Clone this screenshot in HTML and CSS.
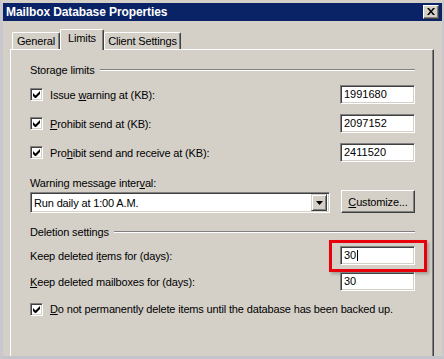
FILE: index.html
```html
<!DOCTYPE html>
<html>
<head>
<meta charset="utf-8">
<link rel="stylesheet" href="styles.css">
</head>
<body>
<div class="window">
  <div class="titlebar">
    <span class="title">Mailbox Database Properties</span>
    <div class="close">
      <svg width="8" height="7" viewBox="0 0 8 7"><path d="M0 0h2l2 2.5L6 0h2L5 3.5 8 7H6L4 4.5 2 7H0l3-3.5z" fill="#000"/></svg>
    </div>
  </div>
  <div class="client">
    <div class="tabs">
      <div class="tab">General</div>
      <div class="tab active">Limits</div>
      <div class="tab">Client Settings</div>
    </div>
    <div class="panel">
      <div class="group g1"><span>Storage limits</span><div class="etch"></div></div>
      <div class="row r1">
        <div class="check"><svg width="7" height="7" viewBox="0 0 7 7"><path d="M0 2v3l2 2h1l4-4V0L2.5 4.5z" fill="#000"/></svg></div>
        <span class="label">Issue <u>w</u>arning at (KB):</span>
        <div class="field">1991680</div>
      </div>
      <div class="row r2">
        <div class="check"><svg width="7" height="7" viewBox="0 0 7 7"><path d="M0 2v3l2 2h1l4-4V0L2.5 4.5z" fill="#000"/></svg></div>
        <span class="label"><u>P</u>rohibit send at (KB):</span>
        <div class="field">2097152</div>
      </div>
      <div class="row r2">
        <div class="check"><svg width="7" height="7" viewBox="0 0 7 7"><path d="M0 2v3l2 2h1l4-4V0L2.5 4.5z" fill="#000"/></svg></div>
        <span class="label">Pro<u>h</u>ibit send and receive at (KB):</span>
        <div class="field">2411520</div>
      </div>
      <div class="plain lbl-interval">Warning message inter<u>v</u>al:</div>
      <div class="row selrow">
        <div class="select">
          <span class="seltext">Run daily at 1:00 A.M.</span>
          <div class="arrow"><svg width="7" height="4" viewBox="0 0 7 4"><path d="M0 0h7L3.5 4z" fill="#000"/></svg></div>
        </div>
        <div class="button"><u>C</u>ustomize...</div>
      </div>
      <div class="group g2"><span>Deletion settings</span><div class="etch"></div></div>
      <div class="row r3">
        <span class="label">Keep deleted i<u>t</u>ems for (days):</span>
        <div class="field focus">30<span class="caret"></span><div class="highlight"></div></div>
      </div>
      <div class="row r4">
        <span class="label"><u>K</u>eep deleted mailboxes for (days):</span>
        <div class="field">30</div>
      </div>
      <div class="row r5">
        <div class="check"><svg width="7" height="7" viewBox="0 0 7 7"><path d="M0 2v3l2 2h1l4-4V0L2.5 4.5z" fill="#000"/></svg></div>
        <span class="label"><u>D</u>o not permanently delete items until the database has been backed up.</span>
      </div>
    </div>
  </div>
</div>
</body>
</html>
```

FILE: styles.css
```css
* { box-sizing: border-box; }
html, body { margin: 0; padding: 0; }
body {
  width: 444px;
  height: 359px;
  overflow: hidden;
  background: #d4d0c8;
  font-family: "Liberation Sans", Arial, sans-serif;
  font-size: 11px;
  letter-spacing: -0.15px;
  color: #000;
}
.window {
  width: 444px;
  height: 359px;
  display: flex;
  flex-direction: column;
  background: #d4d0c8;
  border-top: 3px solid #d4d0c8;
  border-left: 3px solid #c9c8ce;
  border-right: 2px solid #c9c8ce;
  border-bottom: 3px solid #c4c4cc;
  overflow: hidden;
}
.titlebar {
  height: 18px;
  flex: none;
  background: #0a2266;
  display: flex;
  align-items: center;
  justify-content: space-between;
  padding: 0 3px 0 3px;
}
.title {
  color: #fff;
  font-weight: bold;
  font-size: 12px;
  letter-spacing: -0.1px;
}
.close {
  width: 16px;
  height: 14px;
  background: #d4d0c8;
  border-top: 1px solid #fff;
  border-left: 1px solid #fff;
  border-right: 1px solid #404040;
  border-bottom: 1px solid #404040;
  box-shadow: inset -1px -1px 0 #808080;
  display: flex;
  align-items: center;
  justify-content: center;
  padding-bottom: 1px;
}
.client {
  flex: 1;
  display: flex;
  flex-direction: column;
  padding-top: 8px;
}
.tabs {
  display: flex;
  align-items: flex-start;
  margin-left: 9px;
  height: 20px;
  position: relative;
  z-index: 2;
}
.tab {
  margin-top: 3px;
  height: 17px;
  padding: 0 6px;
  line-height: 16px;
  border-top: 1px solid #fff;
  border-left: 1px solid #fff;
  border-right: 1px solid #404040;
  box-shadow: inset -1px 0 0 #808080;
  border-top-left-radius: 2px;
  border-top-right-radius: 2px;
  background: #d4d0c8;
  white-space: nowrap;
}
.tab:first-child { width: 48px; text-align: center; padding: 0; }
.tab.active {
  margin-top: 0;
  height: 21px;
  width: 44px;
  padding: 0;
  text-align: center;
  line-height: 17px;
}
.tab:last-child { width: 77px; text-align: center; padding: 0; }
.panel {
  flex: 1;
  margin: 0 8px 0 7px;
  border-top: 1px solid #fff;
  border-left: 1px solid #fff;
  border-right: 1px solid #404040;
  box-shadow: inset -1px 0 0 #808080;
  padding: 0 18px 0 19px;
  display: flex;
  flex-direction: column;
}
.group {
  display: flex;
  align-items: center;
  height: 14px;
  line-height: 14px;
}
.group span { margin-right: 5px; white-space: nowrap; }
.etch {
  flex: 1;
  height: 2px;
  border-top: 1px solid #808080;
  border-bottom: 1px solid #fff;
}
.g1 { margin-top: 13px; }
.g2 { margin-top: 12px; }
.row {
  display: flex;
  align-items: center;
}
.r1 { margin-top: 8px; height: 19px; }
.r2 { margin-top: 10px; height: 19px; }
.r3 { margin-top: 7px; height: 19px; }
.r4 { margin-top: 7px; height: 19px; }
.r5 { margin-top: 11px; height: 14px; }
.label { flex: 1; white-space: nowrap; line-height: 14px; }
.check {
  width: 13px;
  height: 13px;
  flex: none;
  margin-right: 7px;
  background: #fff;
  border-top: 1px solid #808080;
  border-left: 1px solid #808080;
  border-right: 1px solid #fff;
  border-bottom: 1px solid #fff;
  box-shadow: inset 1px 1px 0 #404040, inset -1px -1px 0 #d4d0c8;
  display: flex;
  align-items: center;
  justify-content: center;
}
.check svg { display: block; }
.field {
  width: 75px;
  height: 19px;
  flex: none;
  background: #fff;
  border-top: 1px solid #808080;
  border-left: 1px solid #808080;
  border-right: 1px solid #fff;
  border-bottom: 1px solid #fff;
  box-shadow: inset 1px 1px 0 #404040, inset -1px -1px 0 #d4d0c8;
  padding: 0 0 0 3px;
  line-height: 17px;
  letter-spacing: 0;
  position: relative;
}
.caret {
  display: inline-block;
  width: 1px;
  height: 11px;
  background: #000;
  vertical-align: -2px;
  margin-left: 1px;
}
.highlight {
  position: absolute;
  left: -12px;
  top: -7px;
  width: 98px;
  height: 32px;
  border: 3px solid #e8000a;
  box-shadow: 2px 2px 3px rgba(0,0,0,0.25);
}
.plain { line-height: 14px; }
.lbl-interval { margin-top: 14px; }
.selrow {
  margin-top: 0;
  height: 23px;
  align-items: flex-end;
}
.select {
  width: 300px;
  height: 21px;
  margin-right: 11px;
  background: #fff;
  border-top: 1px solid #808080;
  border-left: 1px solid #808080;
  border-right: 1px solid #fff;
  border-bottom: 1px solid #fff;
  box-shadow: inset 1px 1px 0 #404040, inset -1px -1px 0 #d4d0c8;
  display: flex;
  align-items: center;
  padding: 2px 2px 2px 3px;
}
.seltext { flex: 1; }
.arrow {
  width: 16px;
  height: 17px;
  background: #d4d0c8;
  border-top: 1px solid #d4d0c8;
  border-left: 1px solid #d4d0c8;
  border-right: 1px solid #404040;
  border-bottom: 1px solid #404040;
  box-shadow: inset 1px 1px 0 #fff, inset -1px -1px 0 #808080;
  display: flex;
  align-items: center;
  justify-content: center;
}
.button {
  width: 74px;
  height: 23px;
  background: #d4d0c8;
  border-top: 1px solid #fff;
  border-left: 1px solid #fff;
  border-right: 1px solid #404040;
  border-bottom: 1px solid #404040;
  box-shadow: inset -1px -1px 0 #808080;
  display: flex;
  align-items: center;
  justify-content: center;
}
```
